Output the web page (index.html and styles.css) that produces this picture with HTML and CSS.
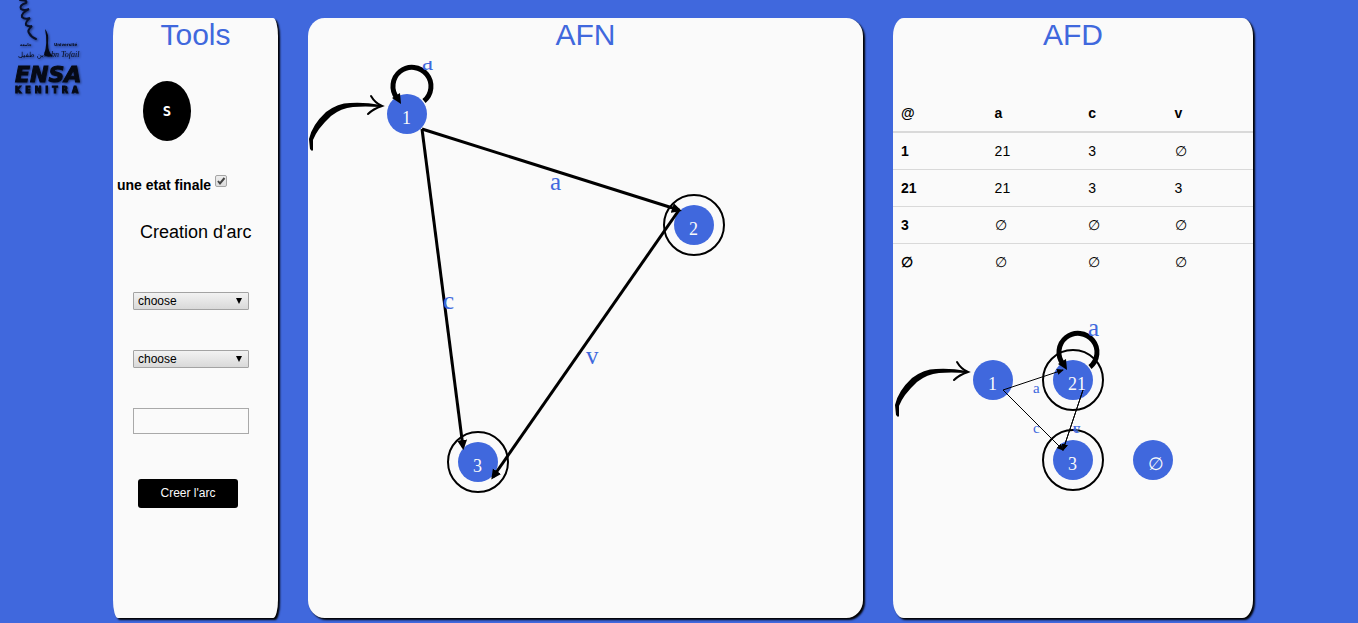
FILE: index.html
```html
<!DOCTYPE html>
<html lang="fr">
<head>
<meta charset="utf-8">
<meta name="viewport" content="width=device-width, initial-scale=1">
<title>AFN - AFD</title>
<link rel="stylesheet" href="styles.css">
</head>
<body>
<svg class="logo" width="90" height="100" role="img" aria-label="ENSA Kenitra">
  <g class="logo-ink">
    <path class="brush" d="M20 0 Q28 0 26 3 Q19 5 21 9 Q24 11 29 9 Q21 13 22 17 Q25 20 30 18 Q25 22 26 25 Q29 27 32 26 Q27 30 29 33 Q31 37 36 39"/>
    <path class="solid" d="M45 29 Q49 33 48 43 Q48 53 53 56 Q47 58 44 55 Q48 43 45 29Z"/>
    <text class="logo-arabic" x="18" y="57">ابن طفيل</text>
    <text class="logo-tiny" x="20" y="46">جامعة</text>
    <text class="logo-script" x="51" y="57">bn Tofail</text>
    <text class="logo-tiny" x="54" y="46">Université</text>
    <text class="logo-name" x="15" y="82">ENSA</text>
    <text class="logo-city" x="15" y="93">KENITRA</text>
  </g>
</svg>

<main class="container">
  <section class="panel tools">
    <h2>Tools</h2>
    <button class="state-button" type="button">S</button>
    <label class="final-state">une etat finale <input type="checkbox" checked></label>
    <h4>Creation d'arc</h4>
    <form class="arc-form">
      <select aria-label="Etat de depart"><option>choose</option></select>
      <select aria-label="Etat d'arrivee"><option>choose</option></select>
      <input type="text" aria-label="Etiquette">
      <button class="create-button" type="button">Creer l'arc</button>
    </form>
  </section>

  <section class="panel">
    <h2>AFN</h2>
    <svg class="graph graph-afn">
      <defs>
        <marker id="head" markerUnits="userSpaceOnUse" markerWidth="12" markerHeight="12" refX="7" refY="6" orient="auto"><path d="M0 1 L10 6 L0 11Z"/></marker>
        <marker id="head-small" markerUnits="userSpaceOnUse" markerWidth="8" markerHeight="8" refX="6" refY="3" orient="auto"><path d="M0 0 L7 3 L0 6Z"/></marker>
        <g id="entry">
          <path d="M2 88 L1 78 Q4 64 18 51 Q30 42 42 42 Q56 41 73 44 L73 46 Q56 45 45 46 Q33 47 23 55 Q9 68 5 79 L5 89 L4 90Z"/>
          <path class="entry-tip" d="M63 35 Q67 42 74 45 Q65 48 60 53"/>
        </g>
        <g id="loop">
          <path class="loop-arc" d="M12 15 A19 19 0 1 0 -15 12"/>
          <path d="M-20 12 L-12 7 L-11 18Z"/>
        </g>
      </defs>
      <use href="#entry"/>
      <circle class="node" cx="99" cy="53" r="20"/>
      <circle class="ring" cx="386" cy="164" r="30"/>
      <circle class="node" cx="386" cy="164" r="20"/>
      <circle class="ring" cx="170" cy="401" r="30"/>
      <circle class="node" cx="170" cy="401" r="20"/>
      <text class="state" x="94" y="63">1</text>
      <text class="state" x="381" y="174">2</text>
      <text class="state" x="165" y="411">3</text>
      <path class="edge" d="M114 68 L371 149"/>
      <path class="edge" d="M114 68 L155 386"/>
      <path class="edge" d="M371 149 L185 416"/>
      <use href="#loop" x="104" y="25"/>
      <text class="symbol" x="114" y="9">a</text>
      <text class="symbol" x="242" y="129">a</text>
      <text class="symbol" x="135" y="248">c</text>
      <text class="symbol" x="278" y="303">v</text>
    </svg>
  </section>

  <section class="panel">
    <h2>AFD</h2>
    <table class="transitions">
      <thead><tr><th>@</th><th>a</th><th>c</th><th>v</th></tr></thead>
      <tbody>
        <tr><th>1</th><td>21</td><td>3</td><td>∅</td></tr>
        <tr><th>21</th><td>21</td><td>3</td><td>3</td></tr>
        <tr><th>3</th><td>∅</td><td>∅</td><td>∅</td></tr>
        <tr><th>∅</th><td>∅</td><td>∅</td><td>∅</td></tr>
      </tbody>
    </table>
    <svg class="graph graph-afd">
      <use href="#entry" x="1" y="26"/>
      <circle class="node" cx="100" cy="79" r="20"/>
      <circle class="ring" cx="180" cy="79" r="30"/>
      <circle class="node" cx="180" cy="79" r="20"/>
      <circle class="ring" cx="180" cy="159" r="30"/>
      <circle class="node" cx="180" cy="159" r="20"/>
      <circle class="node" cx="260" cy="159" r="20"/>
      <text class="state" x="95" y="89">1</text>
      <text class="state" x="175" y="89">21</text>
      <text class="state" x="175" y="169">3</text>
      <text class="state" x="255" y="169">∅</text>
      <path class="edge-small" d="M110 89 L170 69"/>
      <path class="edge-small" d="M110 89 L170 149"/>
      <path class="edge-small" d="M190 89 L170 149"/>
      <path class="edge-small" d="M190 89 L170 149"/>
      <use href="#loop" x="185" y="51"/>
      <text class="symbol" x="195" y="35">a</text>
      <text class="symbol-small" x="140" y="92">a</text>
      <text class="symbol-small" x="140" y="132">c</text>
      <text class="symbol-small" x="180" y="132">c</text>
      <text class="symbol-small" x="180" y="132">v</text>
    </svg>
  </section>
</main>
</body>
</html>
```
FILE: styles.css
```css
* { box-sizing: border-box; }

body {
  margin: 0;
  padding-left: 8px;
  background: #4068dd;
  color: #000;
  font: 14px/20px "Liberation Sans", Arial, sans-serif;
}

.logo { position: absolute; top: 0; left: 0; }
.logo-ink { fill: #060a16; filter: drop-shadow(1px 1px 1px rgba(0, 0, 0, .5)); }
.brush { fill: none; stroke: #08102a; stroke-width: 2; stroke-linecap: round; }
.logo-arabic { font: 7px "DejaVu Sans", sans-serif; }
.logo-script { font: italic 8px "Liberation Serif", serif; }
.logo-tiny { font: bold 4px "DejaVu Sans", sans-serif; }
.logo-name { font: italic bold 22px "DejaVu Sans", sans-serif; stroke: #060a16; stroke-width: 1; }
.logo-city { font: bold 8px "DejaVu Sans", sans-serif; letter-spacing: 4px; stroke: #060a16; stroke-width: 1; }

.container {
  display: grid;
  grid-template-columns: 11fr 37fr 24fr;
  gap: 30px;
  max-width: 1140px;
  margin: 0 auto;
  padding: 18px 0 5px;
}

.panel {
  min-width: 0;
  min-height: calc(100vh - 23px);
  background: #fafafa;
  border-radius: 3%;
  box-shadow: 2px 2px 2px #000;
}

h2 {
  margin: 0;
  color: #4068dd;
  font-size: 30px;
  font-weight: normal;
  line-height: 33px;
  text-align: center;
}

.tools { display: flex; flex-direction: column; }

.state-button {
  width: 48px;
  height: 60px;
  margin: 30px 0 0 30px;
  padding: 0;
  border: 0;
  border-radius: 50%;
  background: #000;
  color: #fff;
  font: bold 14px "DejaVu Sans Mono", monospace;
}

.final-state { margin: 34px 0 0 4px; font-weight: bold; }
.final-state input {
  appearance: none;
  width: 12px;
  height: 12px;
  margin: 0;
  border: 1px solid #a5a5a5;
  border-radius: 2px;
  vertical-align: 3px;
  background: url("data:image/svg+xml,%3Csvg xmlns='http://www.w3.org/2000/svg' viewBox='0 0 10 10'%3E%3Cpath d='M2 5 L4 7.5 L8.5 2' fill='none' stroke='%23444' stroke-width='2'/%3E%3C/svg%3E"), linear-gradient(#eee, #dcdcdc);
}

h4 {
  margin: 27px 0 0 27px;
  font-size: 18px;
  font-weight: normal;
  line-height: 20px;
}

.arc-form {
  display: flex;
  flex-direction: column;
  gap: 40px;
  margin: 50px 29px 0 20px;
}

.arc-form select {
  appearance: none;
  height: 18px;
  padding: 0 4px;
  border: 1px solid #a3a3a3;
  border-radius: 1px;
  color: #000;
  font: 12px/16px "Liberation Sans", Arial, sans-serif;
  background: url("data:image/svg+xml,%3Csvg xmlns='http://www.w3.org/2000/svg' width='6' height='6'%3E%3Cpath d='M0 0 H6 L3 6Z'/%3E%3C/svg%3E") no-repeat right 6px center, linear-gradient(#f2f2f2, #d9d9d9);
}

.arc-form input {
  width: 100%;
  height: 26px;
  padding: 0 4px;
  border: 1px solid #a9a9a9;
  background: #fafafa;
}

.create-button {
  width: 100px;
  height: 29px;
  margin: 5px 0 0 5px;
  padding: 0 0 2px;
  border: 0;
  border-radius: 3px;
  background: #000;
  color: #fafafa;
  font: 12px "Liberation Sans", Arial, sans-serif;
}

.transitions {
  width: 100%;
  margin-top: 44px;
  border-collapse: collapse;
  table-layout: fixed;
}
.transitions th, .transitions td { padding: 8px; text-align: left; }
.transitions thead th { width: 24%; border-bottom: 2px solid #d9d9d9; }
.transitions thead th:nth-child(-n+2) { width: 26%; }
.transitions tbody tr + tr { border-top: 1px solid #d9d9d9; }

.graph { display: block; width: 100%; overflow: hidden; }
.graph-afn { height: 500px; margin-top: 10px; }
.graph-afd { height: 220px; margin-top: 21px; }

.node { fill: #4068dd; }
.ring { fill: none; stroke: #000; stroke-width: 2; }
.edge { stroke: #000; stroke-width: 3; marker-end: url(#head); }
.edge-small { stroke: #000; stroke-width: 1; marker-end: url(#head-small); }
.entry-tip { fill: none; stroke: #000; stroke-width: 2; stroke-linecap: round; }
.loop-arc { fill: none; stroke: #000; stroke-width: 5; }
.state { fill: #fafafa; font: 18px "Liberation Serif", serif; }
.symbol { fill: #4068dd; font: 25px "Liberation Serif", serif; }
.symbol-small { fill: #4068dd; font: 15px "Liberation Serif", serif; }
```
